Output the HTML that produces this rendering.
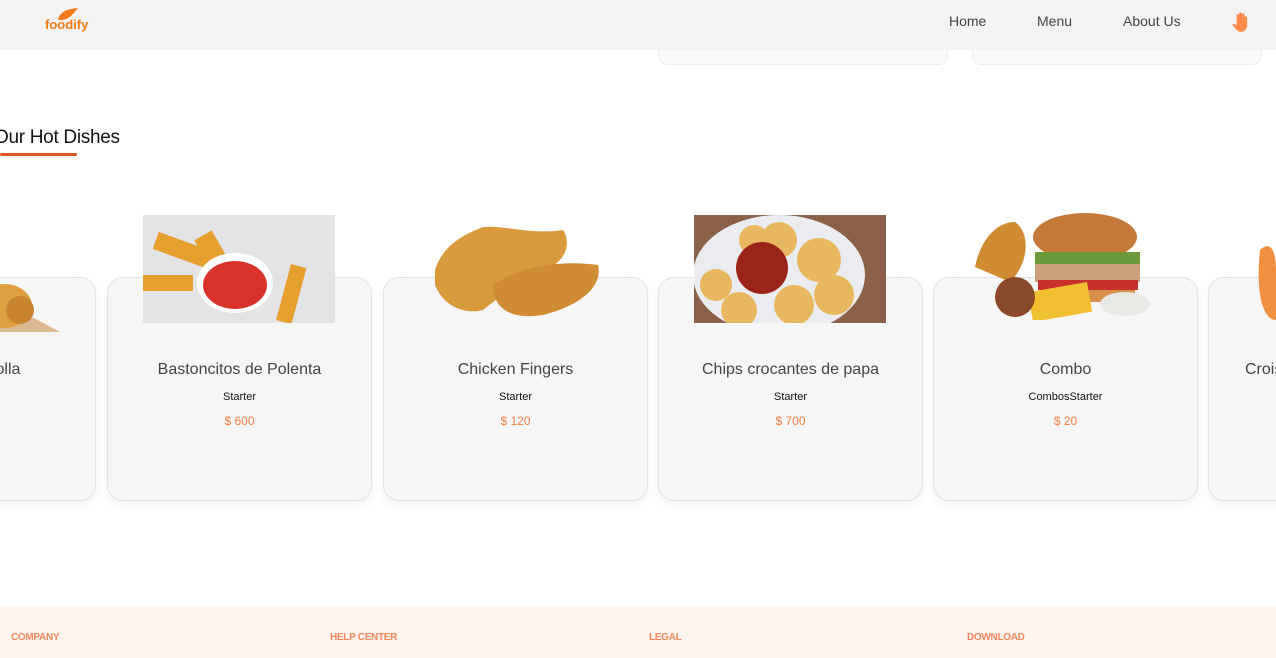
<!DOCTYPE html>
<html><head><meta charset="utf-8"><style>
*{margin:0;padding:0;box-sizing:border-box}
html,body{width:1276px;height:658px;overflow:hidden}
body{background:#fff;font-family:"Liberation Sans",sans-serif;position:relative}
.nav{position:absolute;top:0;left:0;width:1276px;height:50px;background:#f4f2f3;z-index:5}
.nav a{position:absolute;top:13px;font-size:14px;color:#444;text-decoration:none}
.logo{position:absolute;left:45px;top:17px;font-weight:bold;color:#f47a16;font-size:13px}
.ghost{position:absolute;top:40px;height:25px;background:#f8f9fb;border:1px solid #eceef2;border-radius:0 0 10px 10px}
h2{position:absolute;left:-6px;top:127px;font-size:19px;font-weight:normal;color:#111;letter-spacing:-0.3px}
.ul{position:absolute;left:0;top:153px;width:77px;height:3px;background:#e0561f;border-radius:2px}
.wrap{position:absolute;left:0;top:0;width:1276px;height:658px;overflow:hidden}
.card{position:absolute;top:277px;width:265px;height:224px;background:#f6f6f6;border:1px solid #e2e2e6;border-radius:16px;box-shadow:0 4px 10px rgba(0,0,0,0.06)}
.card .t{position:absolute;top:83px;left:0;width:100%;text-align:center;font-size:16px;color:#444;white-space:nowrap}
.card .s{position:absolute;top:113px;width:100%;text-align:center;font-size:11px;color:#111}
.card .p{position:absolute;top:136px;width:100%;text-align:center;font-size:12px;color:#f47f3e}
.img{position:absolute;top:215px;width:192px;height:108px}
.foot{position:absolute;top:606px;left:0;width:1276px;height:52px;background:#fef5ef}
.foot span{position:absolute;top:26px;font-size:10px;font-weight:bold;color:#f5875a;letter-spacing:-0.3px}
</style></head><body>
<div class="wrap">
<div class="nav">
<svg style="position:absolute;left:56px;top:7px" width="24" height="14" viewBox="0 0 24 14"><path d="M2 13 C4 4 12 2 22 1 C18 6 14 12 6 13 Z" fill="#f47a16"/></svg>
<div class="logo">foodify</div>
<a style="left:949px">Home</a><a style="left:1037px">Menu</a><a style="left:1123px">About Us</a>
<svg style="position:absolute;left:1231px;top:11px" width="20" height="22" viewBox="0 0 18 20"><path d="M5 10 V4 a1.2 1.2 0 0 1 2.4 0 V9 V2.5 a1.2 1.2 0 0 1 2.4 0 V9 V3.5 a1.2 1.2 0 0 1 2.4 0 V10 V6 a1.2 1.2 0 0 1 2.4 0 V13 a6 6 0 0 1 -6 6 C6 19 4 16 1.5 13 C1 12 2.5 11 3.5 12 L5 13.5 Z" fill="#ff8a4a"/></svg>
</div>
<div class="ghost" style="left:658px;width:290px"></div>
<div class="ghost" style="left:972px;width:290px"></div>
<h2>Our Hot Dishes</h2><div class="ul"></div>

<div class="card" style="left:-169px"><div class="t">Aros de Cebolla</div></div>
<div class="card" style="left:107px"><div class="t">Bastoncitos de Polenta</div><div class="s">Starter</div><div class="p">$ 600</div></div>
<div class="card" style="left:383px"><div class="t">Chicken Fingers</div><div class="s">Starter</div><div class="p">$ 120</div></div>
<div class="card" style="left:658px"><div class="t">Chips crocantes de papa</div><div class="s">Starter</div><div class="p">$ 700</div></div>
<div class="card" style="left:933px"><div class="t">Combo</div><div class="s">CombosStarter</div><div class="p">$ 20</div></div>
<div class="card" style="left:1208px"><div class="t" style="text-align:left;left:36px">Croissant</div></div>

<svg style="position:absolute;left:0;top:280px" width="64" height="58" viewBox="0 0 64 58"><polygon points="0,52 60,52 34,38 0,40" fill="#dcb992"/><ellipse cx="4" cy="26" rx="28" ry="22" fill="#e0a040"/><ellipse cx="20" cy="30" rx="14" ry="14" fill="#c98430"/></svg>

<svg class="img" style="left:143px" viewBox="0 0 192 108"><rect width="192" height="108" fill="#e4e3e6"/><g fill="#e6a030"><rect x="10" y="30" width="80" height="18" transform="rotate(20 50 40)"/><rect x="70" y="15" width="20" height="80" transform="rotate(-30 80 55)"/><rect x="140" y="50" width="16" height="58" transform="rotate(15 148 80)"/><rect x="0" y="60" width="50" height="16"/></g><ellipse cx="92" cy="68" rx="38" ry="30" fill="#fff"/><ellipse cx="92" cy="70" rx="32" ry="24" fill="#d9322a"/></svg>

<svg class="img" style="left:423px" viewBox="0 0 192 108"><g fill="#d99a3c"><path d="M12 55 C20 30 40 20 60 12 C80 10 110 20 140 15 C150 30 140 50 120 55 C100 60 80 80 60 95 C40 100 20 90 12 70 Z"/><path d="M70 70 C100 50 140 45 175 50 C180 70 160 90 120 100 C90 105 70 95 70 70 Z" fill="#cf8c34"/></g></svg>

<svg class="img" style="left:694px" viewBox="0 0 192 108"><rect width="192" height="108" fill="#8a6048"/><ellipse cx="85" cy="60" rx="86" ry="60" fill="#eaecef"/><g fill="#e8b860"><circle cx="85" cy="25" r="18"/><circle cx="125" cy="45" r="22"/><circle cx="140" cy="80" r="20"/><circle cx="100" cy="90" r="20"/><circle cx="45" cy="95" r="18"/><circle cx="22" cy="70" r="16"/><circle cx="60" cy="25" r="15"/></g><circle cx="68" cy="53" r="26" fill="#9a2418"/></svg>

<svg class="img" style="left:970px;top:212px" viewBox="0 0 192 108"><ellipse cx="115" cy="25" rx="52" ry="24" fill="#c57a3a"/><rect x="65" y="40" width="105" height="14" fill="#6c9a3a"/><rect x="65" y="52" width="105" height="18" fill="#c9a07a"/><rect x="68" y="68" width="100" height="10" fill="#c8302a"/><rect x="70" y="78" width="95" height="12" fill="#d8904a"/><path d="M5 55 C10 30 25 10 45 10 C60 20 60 50 40 70 Z" fill="#d08a30"/><rect x="60" y="75" width="60" height="30" fill="#f0c030" transform="rotate(-10 90 90)"/><ellipse cx="155" cy="92" rx="25" ry="12" fill="#e8e8e4"/><ellipse cx="45" cy="85" rx="20" ry="20" fill="#8a4a2a"/></svg>

<svg style="position:absolute;left:1250px;top:240px" width="26" height="90" viewBox="0 0 26 90"><path d="M10 10 C20 0 26 10 26 30 L26 80 C15 80 5 60 10 10 Z" fill="#f09040"/></svg>

<div class="foot"><span style="left:11px">COMPANY</span><span style="left:330px">HELP CENTER</span><span style="left:649px">LEGAL</span><span style="left:967px">DOWNLOAD</span></div>
</div>
</body></html>
